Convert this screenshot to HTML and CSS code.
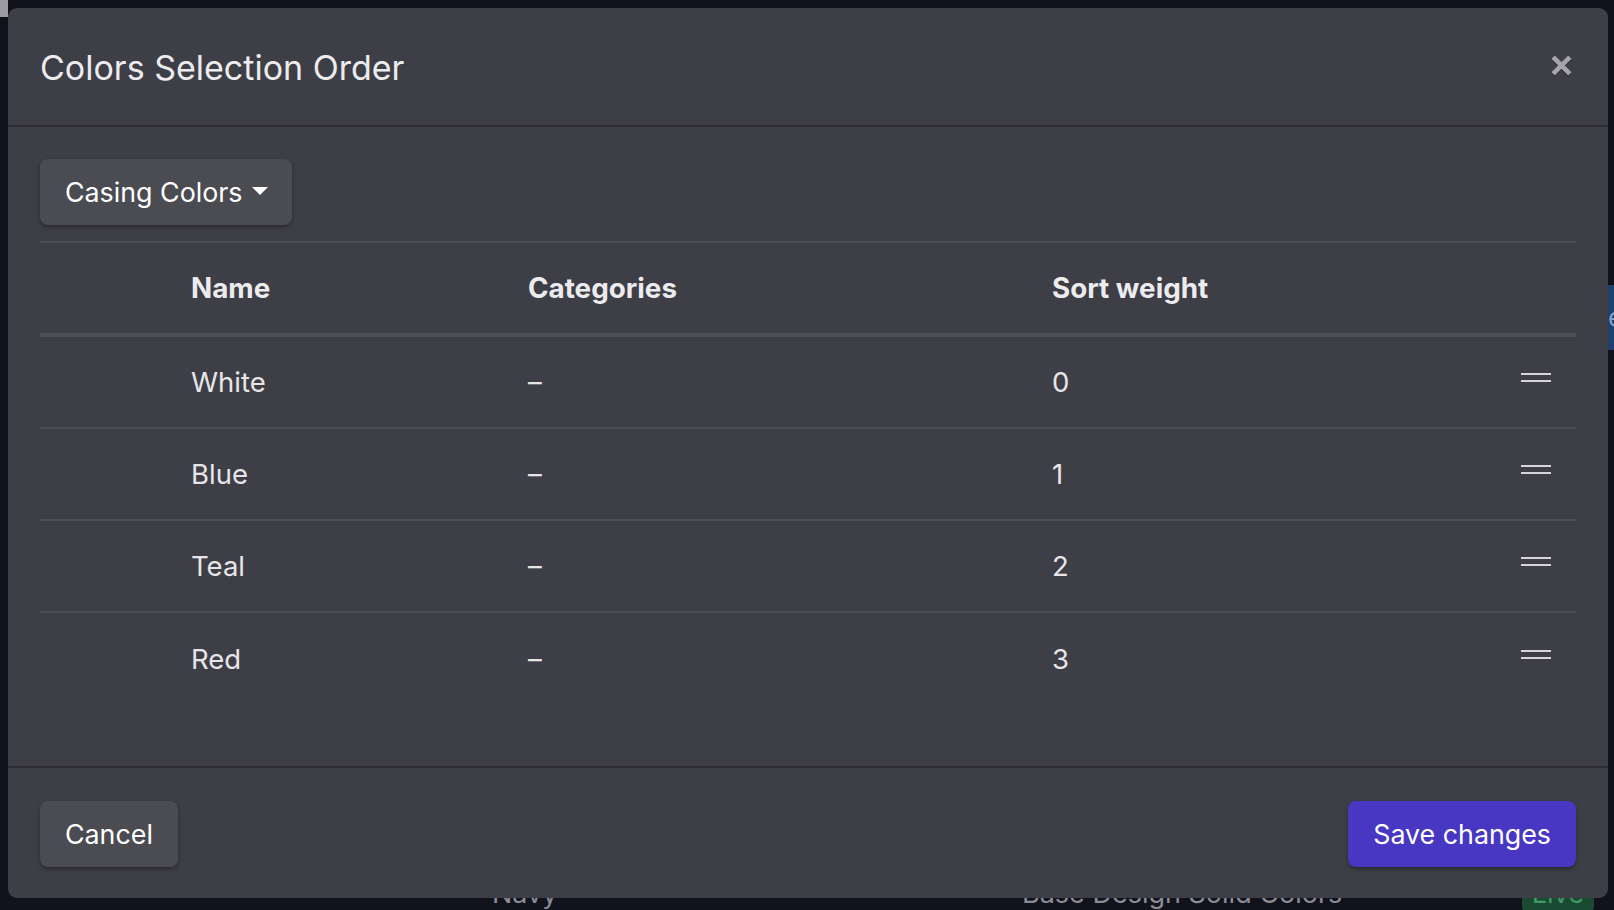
FILE: index.html
```html
<!DOCTYPE html>
<html lang="en">
<head>
<meta charset="utf-8">
<title>Colors Selection Order</title>
<link rel="stylesheet" href="styles.css">
</head>
<body>
<div class="page">
  <div class="page-top"><span class="chip"></span><span class="tabline"></span></div>
  <div class="page-side-blue">e</div>
  <div class="page-bottom">
    <span class="pb-spacer"></span>
    <span class="pb-name">Navy</span>
    <span class="pb-cat">Base Design Solid Colors</span>
    <span class="pb-live">Live</span>
  </div>
</div>

<div class="modal" role="dialog" aria-labelledby="modal-title">
  <header class="modal-header">
    <h2 id="modal-title" class="modal-title">Colors Selection Order</h2>
    <button class="close" aria-label="Close">
      <svg width="23" height="23" viewBox="0 0 22 22" aria-hidden="true">
        <path d="M3 3 L19 19 M19 3 L3 19" stroke="currentColor" stroke-width="4.6" stroke-linecap="butt"/>
      </svg>
    </button>
  </header>

  <section class="modal-body">
    <button class="btn btn-secondary dropdown-toggle">Casing Colors<span class="caret"></span></button>

    <div class="table">
      <div class="tr thead">
        <div class="td"></div>
        <div class="td">Name</div>
        <div class="td">Categories</div>
        <div class="td">Sort weight</div>
      </div>
      <div class="tr">
        <div class="td"></div>
        <div class="td">White</div>
        <div class="td">–</div>
        <div class="td weight">0<span class="handle"><i></i><i></i></span></div>
      </div>
      <div class="tr">
        <div class="td"></div>
        <div class="td">Blue</div>
        <div class="td">–</div>
        <div class="td weight">1<span class="handle"><i></i><i></i></span></div>
      </div>
      <div class="tr">
        <div class="td"></div>
        <div class="td">Teal</div>
        <div class="td">–</div>
        <div class="td weight">2<span class="handle"><i></i><i></i></span></div>
      </div>
      <div class="tr last">
        <div class="td"></div>
        <div class="td">Red</div>
        <div class="td">–</div>
        <div class="td weight">3<span class="handle"><i></i><i></i></span></div>
      </div>
    </div>
  </section>

  <footer class="modal-footer">
    <button class="btn btn-secondary">Cancel</button>
    <button class="btn btn-primary">Save changes</button>
  </footer>
</div>
</body>
</html>
```

FILE: styles.css
```css
* { box-sizing: border-box; }

html, body {
  margin: 0;
  padding: 0;
  width: 1614px;
  height: 910px;
  overflow: hidden;
}

body {
  background: #11111a;
  font-family: Inter, "Noto Sans", "Liberation Sans", sans-serif;
  color: #e8e8ea;
}

/* underlying page (mostly hidden behind the modal) */
.page {
  position: relative;
  width: 1614px;
  height: 910px;
  background: #12121c;
}
.page-top {
  height: 30px;
  display: flex;
  align-items: flex-start;
}
.chip {
  display: block;
  width: 8px;
  height: 17px;
  background: #9a9aa0;
}
.tabline {
  display: block;
  width: 12px;
  height: 3px;
  margin-top: 27px;
  background: #1f6f9a;
}
.page-side-blue {
  position: absolute;
  right: 0;
  top: 285px;
  width: 6px;
  height: 65px;
  background: #1f3f6d;
  color: #8aa0c0;
  font-size: 26px;
  line-height: 65px;
  overflow: hidden;
}
.page-bottom {
  position: absolute;
  left: 0;
  top: 874px;
  width: 1614px;
  height: 40px;
  display: grid;
  grid-template-columns: 492px 530px 1fr auto;
  align-items: start;
  font-size: 27px;
  line-height: 40px;
  color: #8c8c96;
}
.pb-cat { white-space: nowrap; }
.pb-live {
  margin-right: 20px;
  background: #1b4a33;
  color: #3f9a66;
  border-radius: 8px;
  padding: 0 10px;
}

/* modal */
.modal {
  position: absolute;
  left: 8px;
  top: 8px;
  width: 1600px;
  height: 890px;
  background: #3e3e46;
  border-radius: 9px;
  display: flex;
  flex-direction: column;
  overflow: hidden;
}

.modal-header {
  height: 119px;
  flex: 0 0 auto;
  display: flex;
  align-items: center;
  justify-content: space-between;
  padding: 2px 35px 0 32px;
  border-bottom: 2px solid #2d2d33;
}

.modal-title {
  margin: 0;
  font-size: 34px;
  font-weight: 400;
  line-height: 54px;
  color: #ececee;
}

.close {
  background: none;
  border: 0;
  padding: 0;
  margin: -4px 0 0 0;
  color: #a4a4aa;
  display: flex;
  filter: drop-shadow(0 1px 0 rgba(0,0,0,0.45));
  cursor: pointer;
}

.modal-body {
  flex: 1 1 auto;
  padding: 32px 32px 0 32px;
}

.btn {
  font-family: Inter, "Noto Sans", "Liberation Sans", sans-serif;
  font-size: 26.8px;
  font-weight: 400;
  line-height: 42px;
  padding: 12px 25px;
  border: 0;
  border-radius: 8px;
  color: #ffffff;
  box-shadow: 0 2px 4px rgba(0,0,0,0.35);
  cursor: pointer;
  display: inline-flex;
  align-items: center;
}

.btn-secondary { background: #4b4c52; }
.btn-primary { background: #4737c3; }

.dropdown-toggle { padding-right: 24px; }

.caret {
  display: inline-block;
  margin-left: 9px;
  margin-top: -2px;
  width: 0;
  height: 0;
  border-top: 8px solid #ffffff;
  border-left: 8px solid transparent;
  border-right: 8px solid transparent;
}

.table {
  margin-top: 16px;
  border-top: 2px solid #4d4e56;
}

.tr {
  display: grid;
  grid-template-columns: 151px 337px 524px 1fr;
  height: 92px;
  align-items: center;
  border-bottom: 2px solid #4d4e56;
  font-size: 27.5px;
  line-height: 40px;
  color: #e6e6e8;
}

.tr.thead {
  height: 94px;
  border-bottom: 4px solid #4d4e56;
  font-weight: 700;
  font-size: 27.8px;
  color: #ececee;
}

.tr.last { border-bottom: 0; }

.weight {
  display: flex;
  align-items: center;
  justify-content: space-between;
  padding-right: 25px;
}

.handle {
  display: flex;
  flex-direction: column;
  gap: 5px;
  width: 30px;
  margin-top: -10px;
}
.handle i {
  display: block;
  height: 2px;
  background: #d6d6da;
}

.modal-footer {
  flex: 0 0 auto;
  height: 132px;
  border-top: 2px solid #2d2d33;
  display: flex;
  justify-content: space-between;
  align-items: flex-start;
  padding: 33px 32px 0 32px;
}
```
